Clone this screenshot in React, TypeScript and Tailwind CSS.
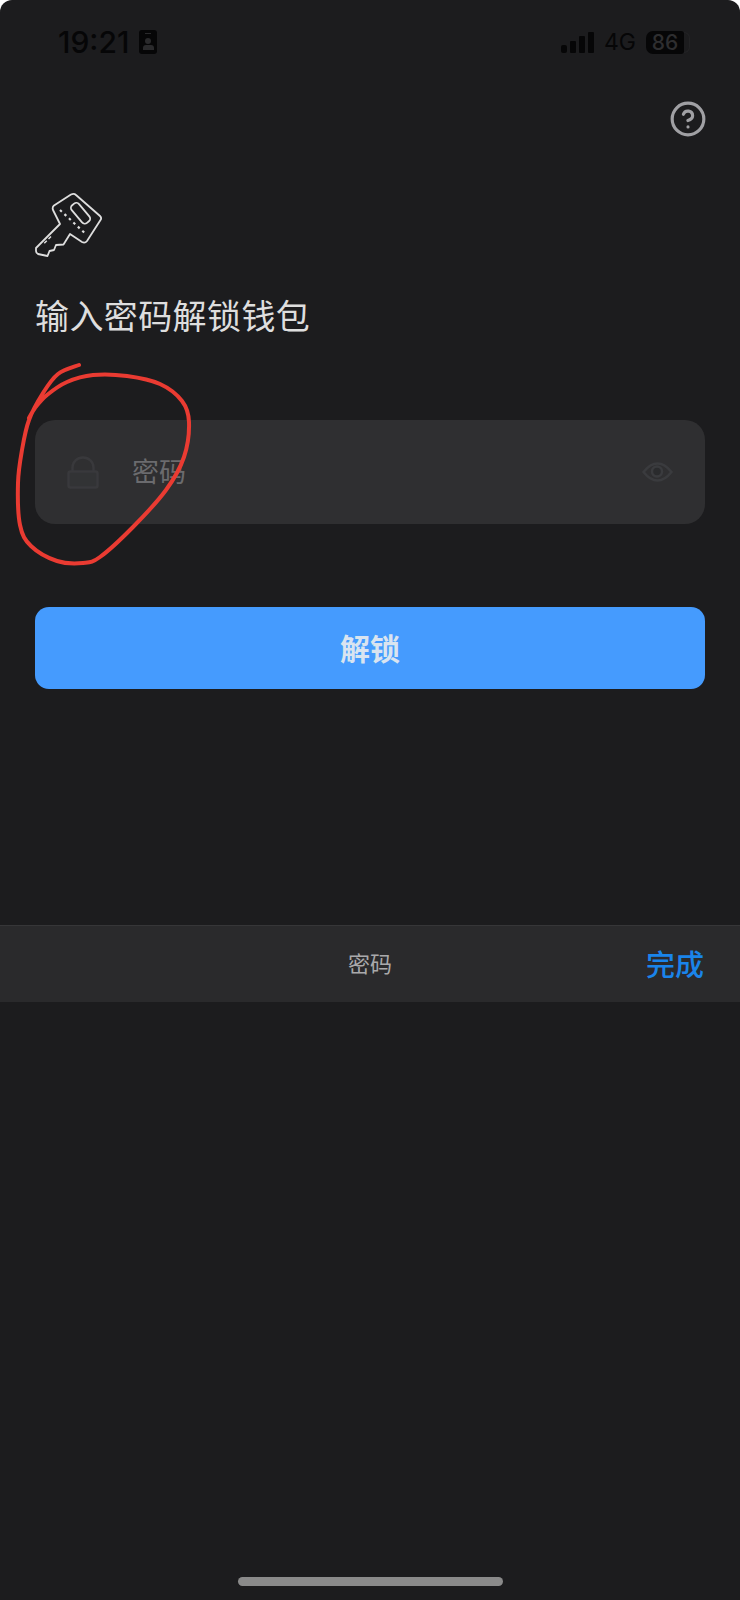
import { HelpCircle } from 'lucide-react'

const cjk = { fontFamily: '"Noto Sans CJK SC", "Noto Sans", sans-serif' }

// points of the hand drawn circle, joined with a smooth curve
const scribble = [
  [79, 365], [58, 374], [43, 393], [29, 420], [22, 450], [18, 483], [20, 525], [31, 546], [57, 561], [83, 563],
  [100, 557], [133, 527], [166, 490], [184, 457], [189, 422], [182, 401], [160, 384], [127, 376], [93, 375],
  [67, 382], [47, 395], [35, 408], [29, 418],
]

function smoothPath(pts: number[][]) {
  let d = `M${pts[0][0]} ${pts[0][1]}`
  for (let i = 0; i < pts.length - 1; i++) {
    const p0 = pts[Math.max(i - 1, 0)]
    const p1 = pts[i]
    const p2 = pts[i + 1]
    const p3 = pts[Math.min(i + 2, pts.length - 1)]
    d += ` C${p1[0] + (p2[0] - p0[0]) / 6} ${p1[1] + (p2[1] - p0[1]) / 6} ${p2[0] - (p3[0] - p1[0]) / 6} ${p2[1] - (p3[1] - p1[1]) / 6} ${p2[0]} ${p2[1]}`
  }
  return d
}

function KeyIcon() {
  return (
    <svg width="68" height="68" viewBox="35 191 68 68" fill="none" stroke="#dedede" strokeWidth="1.8" strokeLinejoin="round">
      <path d="M70 234 L63.5 244.5 L56 245 L54 250 L49.5 251 L47.5 256 L38 254 Q36 253 36 251 L36 248 L60 224 L53 210 Q52 207 54 205.5 L71 194.5 Q74 193 76 195 L100 216 Q102 218 100.5 220 L87 241 Q85 243.5 82 242 Z" />
      <rect x="69" y="208.5" width="23" height="9.5" rx="3.5" transform="rotate(50 80.5 213.3)" />
      <path d="M60 210 L85 233.3" strokeDasharray="2.5 3.6" strokeWidth="2.2" />
      <path d="M51 236.5 L43 244.5" strokeDasharray="3.5 2.5" strokeWidth="1.5" />
    </svg>
  )
}

function LockIcon() {
  return (
    <svg width="32" height="33" viewBox="0 0 32 33" fill="none" stroke="#39393c" strokeWidth="2.5">
      <path d="M5.5 16 V11.5 a10.5 10 0 0 1 21 0 V16" />
      <rect x="1.5" y="15.5" width="29" height="16" rx="2" fill="#323335" />
    </svg>
  )
}

function EyeIcon() {
  return (
    <svg width="31" height="20" viewBox="0 0 31 20" fill="none" stroke="#3a3b3e" strokeWidth="2.5">
      <path d="M1.5 10 C7 3 11 1.5 15.5 1.5 C20 1.5 24 3 29.5 10 C24 17 20 18.5 15.5 18.5 C11 18.5 7 17 1.5 10 Z" />
      <circle cx="15" cy="9.5" r="5" fill="#2a2b2d" />
    </svg>
  )
}

function Signal() {
  return (
    <div className="flex items-end gap-[3px]">
      <div className="h-[8px] w-[6px] rounded-[2px] bg-[#060607]" />
      <div className="h-[12px] w-[6px] rounded-[1px] bg-[#060607]" />
      <div className="h-[17px] w-[6px] rounded-[1px] bg-[#060607]" />
      <div className="h-[21px] w-[6px] rounded-[1px] bg-[#060607]" />
    </div>
  )
}

export default function App() {
  return (
    <div className="relative h-[1600px] w-[740px] overflow-hidden bg-white" style={cjk}>
      <div className="flex h-full flex-col rounded-t-[12px] bg-[#1c1c1e]">
        {/* status bar */}
        <div
          className="flex h-[57px] items-center justify-between pl-[58px] pr-[50px] pt-[27px]"
          style={{ fontFamily: 'Inter, "Liberation Sans", sans-serif' }}
        >
          <div className="flex items-center gap-[10px]">
            <span className="text-[30px] font-medium leading-[30px] text-[#060607]">19:21</span>
            <div className="flex h-[24px] w-[18px] flex-col items-center rounded-[3px] bg-[#060607] pt-[3px]">
              <div className="h-[1px] w-[6px] bg-[#2a2a2c]" />
              <div className="mt-[4px] h-[6px] w-[6px] rounded-full bg-[#2a2a2c]" />
              <div className="mt-[1px] h-[5px] w-[11px] rounded-t-[3px] bg-[#2a2a2c]" />
            </div>
          </div>
          <div className="flex items-center">
            <Signal />
            <span className="ml-[10px] text-[23px] leading-[24px] text-[#060607]">4G</span>
            <div className="ml-[10px] flex h-[23px] w-[38px] items-center justify-center rounded-l-[7px] rounded-r-[3px] bg-[#060607] text-[21px] font-medium leading-none text-[#2e2e30]">
              86
            </div>
            <div className="h-[21px] w-[6px] rounded-r-[6px] border border-l-0 border-[#232325]" />
          </div>
        </div>

        <div className="flex justify-end pr-[33px] pt-[43px]">
          <HelpCircle size={38} color="#a0a0a4" strokeWidth={2} />
        </div>

        <div className="px-[35px]">
          <div className="mt-[53px]">
            <KeyIcon />
          </div>
          <h1 className="mt-[34px] text-[34px] font-normal leading-[44px] tracking-[0.4px] text-[#dedede]">输入密码解锁钱包</h1>

          <div className="mt-[83px] flex h-[104px] items-center rounded-[20px] bg-[#2f2f31] pl-[32px] pr-[32px]">
            <LockIcon />
            <span className="mb-[3px] ml-[33px] text-[27px] leading-none text-[#6b6b6e]">密码</span>
            <div className="ml-auto">
              <EyeIcon />
            </div>
          </div>

          <button className="mt-[83px] flex h-[82px] w-full items-center justify-center rounded-[14px] bg-[#459bfe] pb-[2px] text-[30px] font-bold text-[#d9e4f0]">
            解锁
          </button>
        </div>

        {/* keyboard toolbar */}
        <div className="relative mt-[236px] flex h-[77px] items-center justify-center border-t border-[#363638] bg-[#2a2a2c]">
          <span className="mb-[3px] text-[22px] text-[#a9a9ab]">密码</span>
          <span className="absolute right-[36px] text-[29px] font-medium text-[#1a84ea]">完成</span>
        </div>

        <div className="mt-auto flex justify-center pb-[14px]">
          <div className="h-[9px] w-[265px] rounded-full bg-[#8a8a8a]" />
        </div>
      </div>

      {/* hand drawn circle on top of the screenshot */}
      <svg className="absolute left-0 top-0" width="200" height="580" viewBox="0 0 200 580" fill="none">
        <path d={smoothPath(scribble)} stroke="#ea3b32" strokeWidth="4" strokeLinecap="round" />
      </svg>
    </div>
  )
}
